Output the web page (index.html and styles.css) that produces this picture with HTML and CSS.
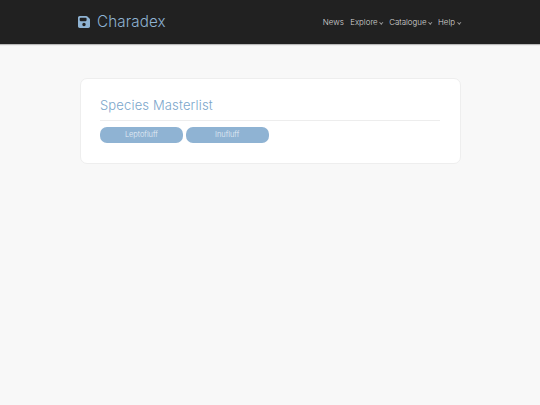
FILE: index.html
```html
<!DOCTYPE html>
<html lang="en">
<head>
    <meta charset="UTF-8">
    <meta name="viewport" content="width=device-width, initial-scale=1.0">
    <title>Charadex</title>
    <link rel="stylesheet" href="styles.css">
</head>
<body>
    <nav class="navbar">
        <a class="brand" href="#">
            <svg class="brand-icon" viewBox="0 0 448 512" aria-hidden="true">
                <path fill-rule="evenodd" d="M64 32C29 32 0 61 0 96v320c0 35 29 64 64 64h320c35 0 64-29 64-64V173c0-17-7-33-19-45l-77-77c-12-12-28-19-45-19H64zm0 96c0-18 14-32 32-32h192c18 0 32 14 32 32v64c0 18-14 32-32 32H96c-18 0-32-14-32-32v-64zm160 160a64 64 0 1 1 0 128 64 64 0 1 1 0-128z"/>
            </svg>
            <span class="brand-name">Charadex</span>
        </a>
        <ul class="nav-links">
            <li>News</li>
            <li class="dropdown">Explore</li>
            <li class="dropdown">Catalogue</li>
            <li class="dropdown">Help</li>
        </ul>
    </nav>

    <main class="card">
        <h1>Species Masterlist</h1>
        <div class="species-buttons">
            <a class="species-btn" href="#">Leptofluff</a>
            <a class="species-btn" href="#">Inufluff</a>
        </div>
    </main>
</body>
</html>
```

FILE: styles.css
```css
body {
    margin: 0;
    min-height: 405px;
    background-color: #f8f8f8;
    font-family: "Inter", "Open Sans", sans-serif;
}
.navbar {
    height: 44px;
    box-sizing: border-box;
    padding: 0 80px 0 78px;
    display: flex;
    align-items: center;
    justify-content: space-between;
    background-color: #212121;
    box-shadow: 0 1px 1px rgba(0, 0, 0, 0.25);
}
.brand {
    display: flex;
    align-items: center;
    gap: 7px;
    color: #8fb3d3;
    font-size: 15.2px;
    font-weight: 300;
    line-height: 15px;
    letter-spacing: 0.1px;
    text-decoration: none;
}
.brand-name {
    margin-bottom: 1px;
}
.brand-icon {
    width: 12px;
    height: 14px;
    margin-bottom: 1px;
    fill: #8fb3d3;
}
.nav-links {
    display: flex;
    gap: 6.5px;
    margin: 0 0 1px;
    padding: 0;
    list-style: none;
    color: #d8d8d8;
    font-size: 7.9px;
    font-weight: 300;
}
.dropdown::after {
    content: "";
    display: inline-block;
    width: 1.5px;
    height: 1.5px;
    margin-left: 2.5px;
    margin-bottom: 1.5px;
    border-right: 0.6px solid #999;
    border-bottom: 0.6px solid #999;
    transform: rotate(45deg);
}
.card {
    box-sizing: border-box;
    width: 381px;
    margin: 34px 0 0 80px;
    padding: 17px 20px 20px 19px;
    background-color: #fff;
    border: 1px solid #eeeeee;
    border-radius: 7px;
}
h1 {
    margin: 0;
    padding-bottom: 5px;
    border-bottom: 1px solid #ededed;
    color: #7ba6cb;
    font-size: 13px;
    font-weight: 300;
    line-height: 19px;
    letter-spacing: 0.15px;
}
.species-buttons {
    display: grid;
    grid-template-columns: repeat(4, 1fr);
    gap: 3px;
    margin-top: 6px;
}
.species-btn {
    height: 16px;
    line-height: 16px;
    border-radius: 7px;
    background-color: #8fb3d3;
    color: #e6eef6;
    font-size: 7.4px;
    font-weight: 300;
    text-align: center;
    text-decoration: none;
}
```
